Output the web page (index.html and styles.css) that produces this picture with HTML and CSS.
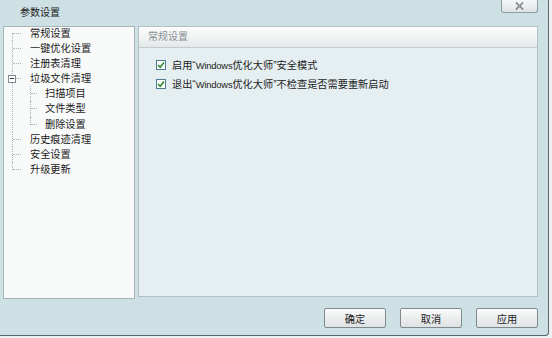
FILE: index.html
```html
<!DOCTYPE html>
<html lang="zh-CN">

<head>
    <meta charset="UTF-8">
    <meta name="viewport" content="width=device-width, initial-scale=1.0">
    <title>参数设置</title>
    <link rel="stylesheet" href="styles.css">
</head>

<body>
    <div class="dialog">
        <div class="titlebar">
            <span class="title">参数设置</span>
            <button class="close">
                <svg width="9" height="8" viewBox="0 0 9 8">
                    <path d="M1 0.5 L4.5 4 L8 0.5 M1 7.5 L4.5 4 L8 7.5" fill="none" stroke="#5f686c" stroke-width="1.6"/>
                    <path d="M1 0.5 L4.5 4 L8 0.5 M1 7.5 L4.5 4 L8 7.5" fill="none" stroke="#e9eef0" stroke-width="0.5"/>
                </svg>
            </button>
        </div>

        <div class="main">
            <div class="nav">
                <ul class="tree">
                    <li>常规设置</li>
                    <li>一键优化设置</li>
                    <li>注册表清理</li>
                    <li class="group"><span class="toggle"></span>垃圾文件清理
                        <ul class="sub">
                            <li>扫描项目</li>
                            <li>文件类型</li>
                            <li>删除设置</li>
                        </ul>
                    </li>
                    <li>历史痕迹清理</li>
                    <li>安全设置</li>
                    <li>升级更新</li>
                </ul>
            </div>

            <div class="content">
                <div class="content-head">常规设置</div>
                <div class="options">
                    <label class="option">
                        <span class="check"><svg width="8" height="8" viewBox="0 0 8 8"><path d="M1 4 L3.2 6.3 L7 1.5" fill="none" stroke="#2e8a2e" stroke-width="1.6"/></svg></span>
                        <span class="text">启用“<span class="latin">Windows</span>优化大师”安全模式</span>
                    </label>
                    <label class="option">
                        <span class="check"><svg width="8" height="8" viewBox="0 0 8 8"><path d="M1 4 L3.2 6.3 L7 1.5" fill="none" stroke="#2e8a2e" stroke-width="1.6"/></svg></span>
                        <span class="text">退出“<span class="latin">Windows</span>优化大师”不检查是否需要重新启动</span>
                    </label>
                </div>
            </div>
        </div>

        <div class="footer">
            <button class="btn">确定</button>
            <button class="btn">取消</button>
            <button class="btn">应用</button>
        </div>
    </div>
</body>

</html>
```

FILE: styles.css
```css
* {
    box-sizing: border-box;
}

body {
    margin: 0;
    background-color: #eef1f2;
    font-family: "Liberation Sans", "Noto Sans CJK SC", sans-serif;
    font-size: 10.2px;
    color: #1c1c1c;
}

.dialog {
    width: 549px;
    height: 336px;
    background-color: #cde0e4;
    border-right: 1px solid #5c676b;
    border-bottom: 1px solid #5c676b;
    border-bottom-right-radius: 4px;
    display: flex;
    flex-direction: column;
}

/* thanh tieu de */
.titlebar {
    height: 26px;
    display: flex;
    justify-content: space-between;
    align-items: flex-start;
}

.titlebar .title {
    margin-left: 20px;
    margin-top: 4px;
    font-size: 10px;
    color: #222;
}

.titlebar .close {
    width: 37px;
    height: 13px;
    margin-right: 10px;
    padding: 0;
    border: 1px solid #8e9ca1;
    border-top: none;
    border-radius: 0 0 3px 3px;
    background: linear-gradient(#f6f8f8, #dde4e6);
    display: flex;
    align-items: center;
    justify-content: center;
}

/* noi dung chinh */
.main {
    display: flex;
    align-items: flex-start;
    height: 273px;
}

.nav {
    width: 132px;
    height: 273px;
    margin-left: 3px;
    background-color: #f8f9f9;
    border: 1px solid #a9b4b8;
}

.tree,
.tree ul {
    list-style: none;
    padding: 0;
}

.tree {
    margin: -1px 0 0 8px;
}

.tree li {
    position: relative;
    padding-left: 18px;
    line-height: 15.1px;
    white-space: nowrap;
}

.tree li::before {
    content: '';
    position: absolute;
    left: 0;
    top: 0;
    bottom: 0;
    border-left: 1px dotted #b0b6b8;
}

.tree li:first-child::before {
    top: 7px;
}

.tree li:last-child::before {
    bottom: auto;
    height: 8px;
}

.tree li::after {
    content: '';
    position: absolute;
    left: 1px;
    top: 7px;
    width: 8px;
    border-top: 1px dotted #b0b6b8;
}

.tree .sub {
    margin: 0;
}

.tree .sub li {
    padding-left: 15px;
}

.tree .sub li:first-child::before {
    top: 0;
}

.tree .sub li::after {
    width: 6px;
}

.tree .toggle {
    position: absolute;
    left: -4px;
    top: 4px;
    width: 8px;
    height: 8px;
    border: 1px solid #7e8b90;
    background-color: #fff;
    z-index: 1;
}

.tree .toggle::after {
    content: '';
    position: absolute;
    left: 1px;
    top: 2px;
    width: 4px;
    border-top: 1px solid #333;
}

.content {
    width: 400px;
    height: 271px;
    margin-left: 3px;
    background-color: #e5eef0;
    border: 1px solid #b3bfc3;
}

.content-head {
    height: 21px;
    padding-left: 9px;
    line-height: 20px;
    font-size: 10px;
    color: #878f93;
    background: linear-gradient(#fbfcfc, #f0f3f3 55%, #e2e7e8);
    border-bottom: 1px solid #c3cbce;
}

.options {
    padding: 7px 0 0 17px;
}

.option {
    display: flex;
    align-items: center;
    height: 19px;
}

.option .text {
    white-space: nowrap;
}

.option .latin {
    font-size: 9.4px;
    letter-spacing: -0.2px;
}

.check {
    width: 10px;
    height: 10px;
    margin-right: 6px;
    border: 1px solid #4f7a94;
    background-color: #fdfefe;
    display: flex;
    align-items: center;
    justify-content: center;
}

/* nut bam */
.footer {
    display: flex;
    justify-content: flex-end;
    gap: 14px;
    padding: 9px 10px 0 0;
}

.btn {
    width: 62px;
    height: 20px;
    padding: 0;
    font-family: "Liberation Sans", "Noto Sans CJK SC", sans-serif;
    font-size: 10.2px;
    color: #1c1c1c;
    border: 1px solid #7f8a8f;
    border-radius: 2px;
    background: linear-gradient(#fbfbfb, #eceeee 50%, #dfe2e3);
}
```
